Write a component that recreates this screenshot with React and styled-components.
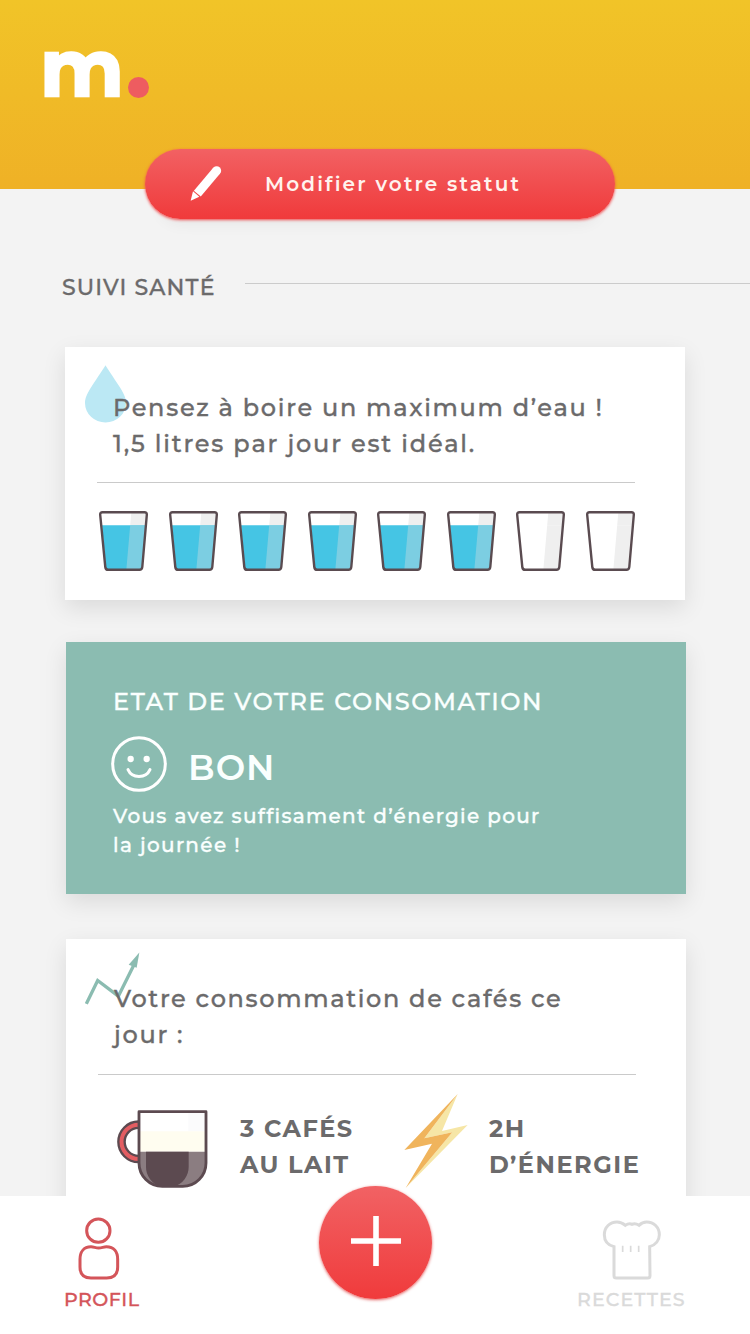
import styled, { createGlobalStyle } from "styled-components";

const GLASSES = [true, true, true, true, true, true, false, false];

function Glass({ full }) {
  return (
    <GlassSvg viewBox="0 0 49 60">
      {full && <path d="M3 14.3H46L43 58H7Z" fill="#45c5e4" />}
      <path d="M32.3 2H47L46 14.3H31.2Z" fill="#efefef" />
      <path d="M31.2 14.3H46L43 58H27.4Z" fill={full ? "#7ccee2" : "#efefef"} />
      <path
        d="M3.6 1.2H45.4Q48 1.2 47.8 3.8L43.3 56Q43 58.8 40.4 58.8H9.2Q6.6 58.8 6.3 56L1.2 3.8Q1 1.2 3.6 1.2Z"
        fill="none"
        stroke="#5a4b50"
        strokeWidth="2.4"
      />
    </GlassSvg>
  );
}

function App() {
  return (
    <Screen>
      <GlobalStyle />
      <Header>
        <Logo>m</Logo>
        <LogoDot />
      </Header>

      <StatusButton>
        <svg width="32" height="36" viewBox="180 103 96 108">
          <path d="M202 189L260 120" stroke="#fff" strokeWidth="27" />
          <circle cx="260" cy="120" r="13.5" fill="#fff" />
          <path d="M182 210L189 182L208 198Z" fill="#fff" />
        </svg>
        <Text size={20} weight={600} height={24} spacing={2.15}>Modifier votre statut</Text>
      </StatusButton>

      <Content>
        <SectionTitle>
          <Text size={22} height={28} spacing={1.15}>SUIVI SANTÉ</Text>
          <TitleLine />
        </SectionTitle>

        <Card height={253}>
          <DropSvg viewBox="105 91 124 174">
            <path d="M167 91C163 99 144 126 124 157C112 176 105 190 105 205A62 59 0 0 0 229 205C229 190 222 176 210 157C190 126 171 99 167 91Z" fill="#bbe8f4" />
          </DropSvg>
          <CardText>
            <Text size={24} height={36} spacing={1.7}>Pensez à boire un maximum d’eau !</Text>
            <Text size={24} height={36} spacing={1.8}>1,5 litres par jour est idéal.</Text>
          </CardText>
          <Divider />
          <GlassRow>
            {GLASSES.map((full, idx) => (
              <Glass key={idx} full={full} />
            ))}
          </GlassRow>
        </Card>

        <StateCard>
          <Text size={24} height={30} spacing={1.55}>ETAT DE VOTRE CONSOMATION</Text>
          <Mood>
            <svg width="56" height="56" viewBox="154 303 168 168" fill="none" stroke="#fff">
              <circle cx="238" cy="387" r="79" strokeWidth="9" />
              <circle cx="213" cy="372" r="9.5" fill="#fff" stroke="none" />
              <circle cx="261" cy="372" r="9.5" fill="#fff" stroke="none" />
              <path d="M205 404C217 431 259 431 271 404" strokeWidth="9" strokeLinecap="round" />
            </svg>
            <Text size={35} weight={600} height={40} spacing={1}>BON</Text>
          </Mood>
          <Text size={20} height={29} spacing={1.32}>Vous avez suffisament d’énergie pour</Text>
          <Text size={20} height={29} spacing={1.35}>la journée !</Text>
        </StateCard>

        <Card height={300}>
          <TrendSvg viewBox="75 66 165 158">
            <path d="M79 221L113 151L175 198L222 104" fill="none" stroke="#8bbcb1" strokeWidth="10" />
            <path d="M238 67L206 104L230 113Z" fill="#8bbcb1" />
          </TrendSvg>
          <CardText up>
            <Text size={24} height={36} spacing={1.65}>Votre consommation de cafés ce</Text>
            <Text size={24} height={36} spacing={1.7}>jour :</Text>
          </CardText>
          <Divider />
          <Stats>
            <CupSvg viewBox="48 91 276 234">
              <path d="M116 135A51.5 51.5 0 0 0 116 238" fill="none" stroke="#5c4a50" strokeWidth="26" />
              <path d="M116 135A51.5 51.5 0 0 0 116 238" fill="none" stroke="#e35d62" strokeWidth="12" />
              <path d="M117 96H318V155H117Z" fill="#fff" />
              <path d="M265 96H318V155H265Z" fill="#fbfbfc" />
              <path d="M117 155H318V216H117Z" fill="#fffdf0" />
              <path d="M117 216H318V250A70 70 0 0 1 248 320H187A70 70 0 0 1 117 250Z" fill="#8b7d81" />
              <path d="M138 216H266V262A60 60 0 0 1 222 320H182A60 60 0 0 1 138 262Z" fill="#5c4a50" />
              <path
                d="M117 96H318V250A70 70 0 0 1 248 320H187A70 70 0 0 1 117 250Z"
                fill="none"
                stroke="#5c4a50"
                strokeWidth="8.5"
                strokeLinejoin="round"
              />
            </CupSvg>
            <StatText width={196} left={32}>
              <Text size={24} weight={700} height={36} spacing={1.5}>3 CAFÉS</Text>
              <Text size={24} weight={700} height={36} spacing={1.45}>AU LAIT</Text>
            </StatText>
            <BoltSvg viewBox="72 43 190 282">
              <path d="M232 43L132 176L216 158L76 325L262 136L185 154Z" fill="#f6e6a6" />
              <path d="M232 43L72 211L155 192L76 325L216 158L132 176Z" fill="#f0b45c" />
            </BoltSvg>
            <StatText width={176} left={21}>
              <Text size={24} weight={700} height={36} spacing={1.5}>2H</Text>
              <Text size={24} weight={700} height={36} spacing={1.55}>D’ÉNERGIE</Text>
            </StatText>
          </Stats>
        </Card>
      </Content>

      <NavBar>
        <NavItem color="#d4555a">
          <NavIcon width={42} height={63} left={14} viewBox="84 50 126 189">
            <circle cx="145" cy="91" r="35" />
            <path d="M123 139.5C132 139.5 136 143 146 143C156 143 160 139.5 169 139.5C192 139.5 203 155 203 177V200Q203 233 170 233H123Q90 233 90 200V177C90 155 101 139.5 123 139.5Z" />
          </NavIcon>
          <Text size={19} height={24} spacing={0.5}>PROFIL</Text>
        </NavItem>
        <AddButton>
          <svg width="52" height="52" viewBox="0 0 52 52">
            <path d="M26 1V51M1 26H51" stroke="#fff" strokeWidth="5.6" />
          </svg>
        </AddButton>
        <NavItem color="#dadada" right>
          <NavIcon width={60} height={63} left={25} viewBox="127 50 180 189">
            <path d="M163 139C144 134 134 120 134 103C134 80 151 65 172 65C183 65 190 69 197 75C206 69 211 69 217 72C223 69 229 69 238 75C245 68 251 65 261 65C282 65 299 80 299 103C299 120 288 134 270 139L271 226Q271 233 264 233H170Q163 233 163 226Z" />
            <path d="M189 136V155M213 136V155M237 136V155" strokeWidth="5" />
          </NavIcon>
          <Text size={19} height={24} spacing={1.1}>RECETTES</Text>
        </NavItem>
      </NavBar>
    </Screen>
  );
}

const GlobalStyle = createGlobalStyle`
  body {
    margin: 0;
    background: #f3f3f3;
    font-family: Montserrat, Inter, "Open Sans", sans-serif;
  }
  * {
    box-sizing: border-box;
  }
  svg {
    display: block;
    flex-shrink: 0;
  }
`;

const Screen = styled.div`
  display: flex;
  flex-direction: column;
  width: 750px;
  height: 1334px;
  overflow: hidden;
  color: #6b6a6b;
  background: #f3f3f3;
`;

const Header = styled.header`
  display: flex;
  flex-shrink: 0;
  height: 189px;
  padding: 37px 0 0 40px;
  background: linear-gradient(#f1c428, #efb126);
`;
const Logo = styled.span`
  width: 88px;
  height: 90px;
  margin-top: -14px;
  font-size: 80px;
  font-weight: 700;
  line-height: 90px;
  color: white;
  -webkit-text-stroke: 2.5px white;
`;
const LogoDot = styled.i`
  width: 21px;
  height: 21px;
  margin-top: 40px;
  border-radius: 50%;
  background: #ee5c60;
`;

const Text = styled.span`
  display: block;
  font-size: ${props => props.size}px;
  font-weight: ${props => props.weight || 500};
  line-height: ${props => props.height}px;
  letter-spacing: ${props => props.spacing}px;
  white-space: nowrap;
  ${props => !props.weight && `-webkit-text-stroke: 0.35px currentColor;`}
`;

const StatusButton = styled.button`
  display: flex;
  flex-shrink: 0;
  align-items: center;
  gap: 43px;
  width: 470px;
  height: 70px;
  margin: -40px 0 0 145px;
  padding: 0 0 0 45px;
  border: none;
  border-radius: 35px;
  font-family: inherit;
  color: #fff3ee;
  background: linear-gradient(#f26163, #f03a3b);
  box-shadow: 0 1px 3px #f0494b, 0 20px 16px -16px rgba(0, 0, 0, 0.06);
  z-index: 1;

  svg {
    margin-top: -3px;
  }
`;

const Content = styled.main`
  display: flex;
  flex-direction: column;
  flex: 1;
  min-height: 0;
  padding-left: 65px;
`;
const SectionTitle = styled.div`
  display: flex;
  justify-content: space-between;
  height: 26px;
  margin: 55px 0 47px -3px;
`;
const TitleLine = styled.div`
  width: 505px;
  height: 1px;
  margin-top: 9px;
  background: #cbcbcb;
`;

const Card = styled.section`
  position: relative;
  flex-shrink: 0;
  width: 620px;
  height: ${props => props.height}px;
  padding: 43px 50px 0 32px;
  background: white;
  box-shadow: 0 8px 22px rgba(0, 0, 0, 0.1);
`;
const CardText = styled.div`
  position: relative;
  height: ${props => (props.up ? 93 : 92)}px;
  margin-top: ${props => (props.up ? -1 : 0)}px;
  padding-left: 16px;
`;
const Divider = styled.div`
  height: 1px;
  background: #cacaca;
`;
const DropSvg = styled.svg`
  position: absolute;
  left: 20px;
  top: 18px;
  width: 41px;
  height: 58px;
`;
const TrendSvg = styled.svg`
  position: absolute;
  left: 19px;
  top: 13px;
  width: 55px;
  height: 53px;
`;
const GlassRow = styled.div`
  display: flex;
  justify-content: space-between;
  margin: 28px 0 0 2px;
`;
const GlassSvg = styled.svg`
  width: 49px;
  height: 60px;
`;

const StateCard = styled.section`
  flex-shrink: 0;
  width: 620px;
  height: 252px;
  margin: 42px 0 45px 1px;
  padding: 45px 0 0 47px;
  color: #fafffe;
  background: #8bbcb1;
  box-shadow: 0 8px 22px rgba(0, 0, 0, 0.1);

  & + section {
    margin-left: 1px;
  }
`;
const Mood = styled.div`
  display: flex;
  gap: 21px;
  height: 65px;
  margin: 19px 0 1px -2px;

  span {
    margin-top: 12px;
  }
`;

const Stats = styled.div`
  display: flex;
  margin: 19px -50px 0 18px;
`;
const CupSvg = styled.svg`
  width: 92px;
  height: 78px;
  margin-top: 16px;
`;
const StatText = styled.div`
  flex-shrink: 0;
  width: ${props => props.width}px;
  padding: 17px 0 0 ${props => props.left}px;
`;
const BoltSvg = styled.svg`
  width: 64px;
  height: 94px;
`;

const NavBar = styled.nav`
  display: grid;
  grid-template-columns: 1fr 113px 1fr;
  flex-shrink: 0;
  height: 138px;
  padding-left: 1px;
  background: white;
  z-index: 1;
`;
const NavItem = styled.div`
  justify-self: ${props => (props.right ? "end" : "start")};
  width: ${props => (props.right ? 173 : 140)}px;
  padding: 21px 0 0 ${props => (props.right ? 0 : 63)}px;
  color: ${props => props.color};
`;
const NavIcon = styled.svg`
  width: ${props => props.width}px;
  height: ${props => props.height}px;
  margin: 0 0 8px ${props => props.left}px;
  fill: none;
  stroke: currentColor;
  stroke-width: 9px;
`;
const AddButton = styled.button`
  display: flex;
  align-items: center;
  justify-content: center;
  width: 113px;
  height: 113px;
  margin-top: -10px;
  padding: 0 0 3px;
  border: none;
  border-radius: 50%;
  background: linear-gradient(#f16264, #f03b3c);
  box-shadow: 0 1px 3px rgba(220, 60, 60, 0.8);
`;

export default App;
